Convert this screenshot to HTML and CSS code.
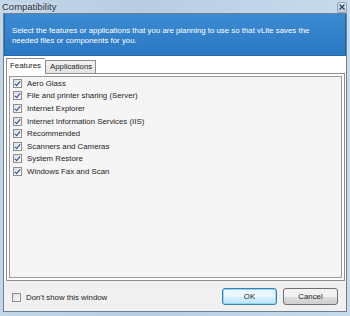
FILE: index.html
```html
<html>
    <head>
        <meta charset="utf-8">
        <link rel="stylesheet" href="styles.css">
    </head>
    <body>
        <div class='window'>
            <div class='titlebar'>
                <div class='title'>Compatibility</div>
                <div class='close'>
                    <svg width="8" height="8" viewBox="0 0 8 8"><path d="M1.5 1.5 L6.5 6.5 M6.5 1.5 L1.5 6.5" stroke="#2c3e55" stroke-width="1.3"/></svg>
                </div>
            </div>
            <div class='client'>
                <div class='banner'>Select the features or applications that you are planning to use so that vLite saves the needed files or components for you.</div>
                <div class='tabs-area'>
                    <div class='tabs'>
                        <div class='tab active'>Features</div>
                        <div class='tab'>Applications</div>
                    </div>
                    <div class='tab-panel'>
                        <div class='list'>
                            <div class='row'><span class='check on'></span>Aero Glass</div>
                            <div class='row'><span class='check on'></span>File and printer sharing (Server)</div>
                            <div class='row'><span class='check on'></span>Internet Explorer</div>
                            <div class='row'><span class='check on'></span>Internet Information Services (IIS)</div>
                            <div class='row'><span class='check on'></span>Recommended</div>
                            <div class='row'><span class='check on'></span>Scanners and Cameras</div>
                            <div class='row'><span class='check on'></span>System Restore</div>
                            <div class='row'><span class='check on'></span>Windows Fax and Scan</div>
                        </div>
                    </div>
                </div>
                <div class='footer'>
                    <div class='row dont-show'><span class='check'></span>Don't show this window</div>
                    <button class='btn default'>OK</button>
                    <button class='btn'>Cancel</button>
                </div>
            </div>
        </div>
    </body>
</html>
```

FILE: styles.css
```css
body {
    margin: 0;
    font-family: "Liberation Sans", Arial, sans-serif;
    font-size: 7.85px;
    color: #1e1e1e;
}
.window {
    width: 350px;
    height: 316px;
    box-sizing: border-box;
    padding: 0 3px 4px 3px;
    background: linear-gradient(90deg, #c3d6e8, #b7cde3 40%, #c8dbec);
    display: flex;
    flex-direction: column;
}
.titlebar {
    height: 13px;
    display: flex;
    align-items: center;
    justify-content: space-between;
}
.title {
    font-size: 9.5px;
    color: #2a2f36;
    margin-left: -1px;
    text-shadow: 0 0 4px #e8f0f8;
}
.close {
    width: 8px;
    height: 9px;
    margin-right: 0;
    margin-top: 1px;
    border: 1px solid #8ea2b8;
    border-radius: 2px;
    background: linear-gradient(#e4edf6, #bccde0);
    display: flex;
    align-items: center;
    justify-content: center;
}
.client {
    flex: 1;
    border: 1px solid #6f7f90;
    background: #f0f0f0;
    display: flex;
    flex-direction: column;
}
.banner {
    height: 42px;
    box-sizing: border-box;
    padding: 12px 10px 0 7px;
    background: linear-gradient(#3b8bd2, #2b78c2);
    border: 1px solid #2566a6;
    border-top: none;
    color: #fff;
    line-height: 10px;
}
.tabs-area {
    background: #fff;
    padding: 1px 1px 0 2px;
}
.tabs {
    display: flex;
    align-items: flex-end;
    height: 16px;
    position: relative;
    z-index: 1;
}
.tab {
    height: 12px;
    padding: 0 3px 0 4px;
    border: 1px solid #8c8e94;
    border-bottom: none;
    background: linear-gradient(#f3f3f3, #e3e3e3);
    line-height: 12px;
}
.tab.active {
    height: 15px;
    background: #fff;
    margin-bottom: -1px;
    line-height: 13px;
    padding: 0 4px 0 3px;
    border-right: none;
}
.tab-panel {
    height: 202px;
    border: 1px solid #8c8e94;
    padding: 2px;
    background: #fff;
}
.list {
    height: 100%;
    box-sizing: border-box;
    border: 1px solid #9a9a9a;
    background: #f5f5f5;
}
.row {
    height: 12.6px;
    display: flex;
    align-items: center;
    padding-left: 3px;
}
.check {
    width: 7px;
    height: 7px;
    border: 1px solid #8e8f8f;
    background: linear-gradient(135deg, #dcdcdc, #fbfbfb);
    margin-right: 5px;
    position: relative;
}
.check.on::after {
    content: '';
    position: absolute;
    left: 2px;
    top: 0;
    width: 2px;
    height: 5px;
    border: solid #2a4a9a;
    border-width: 0 1.5px 1.5px 0;
    transform: rotate(40deg);
}
.footer {
    flex: 1;
    display: flex;
    align-items: center;
    padding: 0 8px 0 4px;
}
.dont-show {
    flex: 1;
    padding-left: 4px;
    margin-top: 2px;
}
.btn {
    width: 55px;
    height: 17px;
    margin: 0 0 0 6px;
    padding: 0;
    font-family: "Liberation Sans", Arial, sans-serif;
    font-size: 7.85px;
    color: #1e1e1e;
    border: 1px solid #707070;
    border-radius: 3px;
    background: linear-gradient(#f2f2f2 50%, #dddddd 50%, #cfcfcf);
}
.btn.default {
    border-color: #3c7fb1;
    box-shadow: inset 0 0 0 1px #8fd6f5;
    background: linear-gradient(#eaf6fd 50%, #d9f0fc 50%, #bee6fd);
}
```
